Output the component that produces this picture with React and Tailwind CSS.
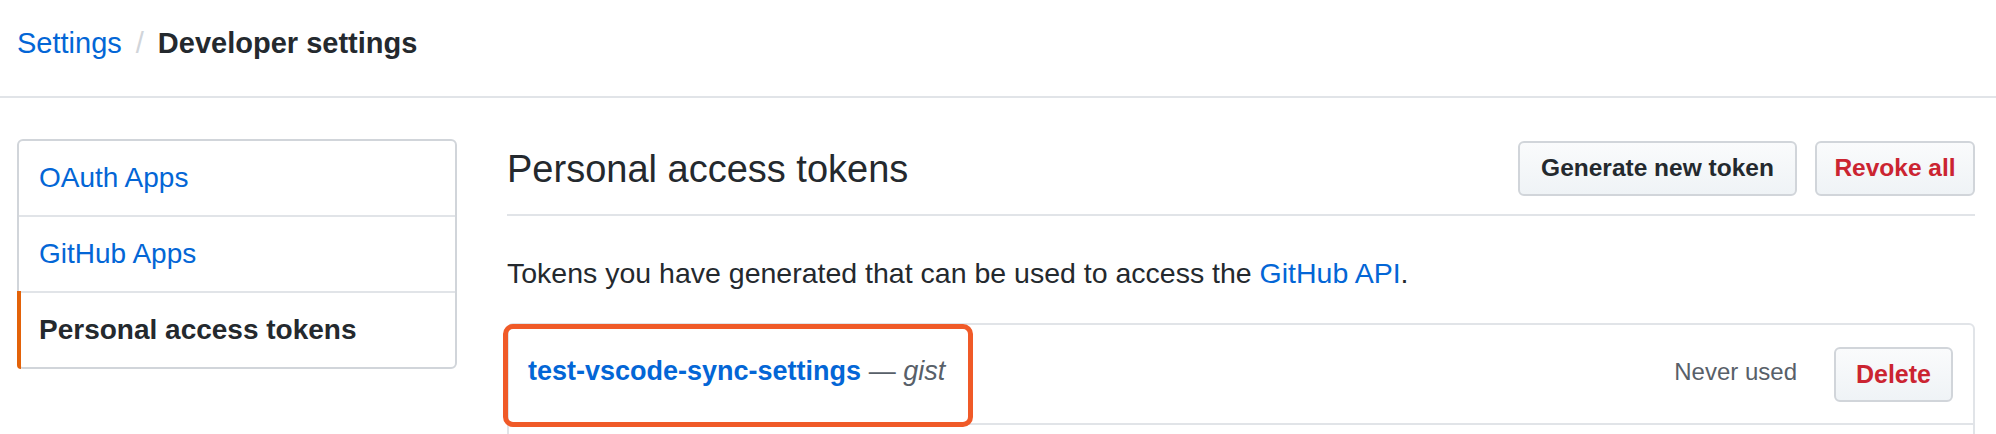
import React from "react";

const navItems = [
  { label: "OAuth Apps", active: false },
  { label: "GitHub Apps", active: false },
  { label: "Personal access tokens", active: true },
];

function Sidebar() {
  return (
    <nav className="self-start w-[440px] shrink-0 border-2 border-[#d1d5da] rounded-[6px] bg-white">
      {navItems.map((item, i) => (
        <div
          key={item.label}
          className={
            "relative flex items-center pl-[20px] text-[28px] leading-[32px] " +
            (i === 0 ? "h-[74px] " : "h-[76px] border-t-2 border-[#e1e4e8] ") +
            (item.active ? "font-bold text-[#24292e]" : "text-[#0366d6]")
          }
        >
          {item.active && (
            <span className="absolute -left-[2px] top-[-2px] bottom-[-2px] w-[4px] bg-[#e36209] rounded-bl-[6px]" />
          )}
          {item.label}
        </div>
      ))}
    </nav>
  );
}

function Button({ children, danger, className = "" }) {
  return (
    <button
      className={
        "h-[55px] rounded-[6px] border-2 border-[#d1d5da] bg-gradient-to-b from-[#fafbfc] to-[#eff3f6] font-bold text-[24.5px] leading-none " +
        (danger ? "text-[#cb2431] " : "text-[#24292e] ") +
        className
      }
    >
      {children}
    </button>
  );
}

export default function App() {
  return (
    <div className="w-[1996px] h-[434px] overflow-hidden bg-white font-['Liberation_Sans',Arial,sans-serif] text-[#24292e]">
      {/* breadcrumb */}
      <header className="h-[98px] border-b-2 border-[#e1e4e8] pl-[17px] pt-[27px]">
        <div className="flex items-baseline text-[29px] leading-[33px]">
          <span className="text-[#0366d6]">Settings</span>
          <span className="mx-[14px] text-[#d1d5da]">/</span>
          <span className="font-bold">Developer settings</span>
        </div>
      </header>

      <div className="flex pl-[17px] pr-[21px] pt-[41px]">
        <Sidebar />

        <main className="ml-[50px] flex-1">
          {/* subhead */}
          <div className="flex items-center justify-between pt-[2px] pb-[18px] border-b-2 border-[#e1e4e8]">
            <h2 className="text-[38px] leading-[44px] font-normal text-[#24292e]">
              Personal access tokens
            </h2>
            <div className="flex gap-[18px]">
              <Button className="w-[279px]">Generate new token</Button>
              <Button danger className="w-[160px]">
                Revoke all
              </Button>
            </div>
          </div>

          <p className="mt-[41px] mb-[33px] text-[28.5px] leading-[33px]">
            Tokens you have generated that can be used to access the{" "}
            <span className="text-[#0366d6]">GitHub API</span>.
          </p>

          {/* token list */}
          <div className="relative border-2 border-[#e1e4e8] rounded-t-[6px]">
            <div className="h-[98px] flex items-center justify-between pl-[19px] pr-[20px]">
              <div className="mb-[6px] text-[27px] leading-[31px]">
                <span className="font-bold text-[#0366d6]">test-vscode-sync-settings</span>
                <span className="text-[#586069]">
                  {" "}— <em>gist</em>
                </span>
              </div>
              <div className="flex items-center gap-[37px]">
                <span className="text-[24px] leading-[28px] text-[#586069] mt-[-4px]">Never used</span>
                <Button danger className="w-[119px] h-[54px] text-[25px]">
                  Delete
                </Button>
              </div>
            </div>
            <div className="h-[80px] border-t-2 border-[#e1e4e8]" />

            {/* highlight annotation */}
            <div className="absolute left-[-6px] top-[-1px] w-[470px] h-[103px] border-[5px] border-[#f05a28] rounded-[10px] pointer-events-none" />
          </div>
        </main>
      </div>
    </div>
  );
}
